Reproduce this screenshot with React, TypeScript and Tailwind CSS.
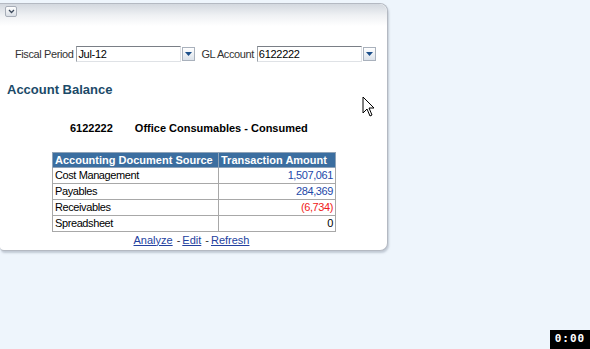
import React from "react"

const Select = ({ value }: { value: string }) => (
  <div className="flex shrink-0 items-center">
    <div className="h-[16px] w-[105px] border border-t-[#7a7f86] border-l-[#9ca1a8] border-r-[#dfe2e6] border-b-[#dfe2e6] bg-white pl-[1px] text-[11px] leading-[14px] tracking-[-0.3px] text-black">
      {value}
    </div>
    <div className="ml-[1px] flex h-[14px] w-[13px] items-center justify-center border border-[#a9b1bc] bg-gradient-to-b from-white to-[#dbe2ea]">
      <svg width="7" height="4" viewBox="0 0 7 4">
        <path d="M0 0h7L3.5 4z" fill="#1c4f8a" />
      </svg>
    </div>
  </div>
)

const rows = [
  { source: "Cost Management", amount: "1,507,061", color: "text-[#2348a8]" },
  { source: "Payables", amount: "284,369", color: "text-[#2348a8]" },
  { source: "Receivables", amount: "(6,734)", color: "text-[#f02020]" },
  { source: "Spreadsheet", amount: "0", color: "text-black" },
]

export default function App() {
  return (
    <div className="relative h-[349px] w-[590px] overflow-hidden bg-[#eef5fc] font-['Liberation_Sans',Arial,sans-serif]">
      <div className="pt-[3px]">
        <div className="relative h-[248px] w-[388px] rounded-r-[8px] rounded-bl-[4px] border border-l-0 border-[#b4b9c2] bg-white shadow-[1px_2px_2px_rgba(150,160,175,0.5)]">
          {/* header strip */}
          <div className="h-[22px] rounded-tr-[8px] bg-gradient-to-b from-[#d3d8df] via-[#eef0f3] to-white px-[5px] pt-[2px]">
            <div className="flex h-[11px] w-[12px] items-center justify-center rounded-[2px] border border-[#a7adb7] bg-gradient-to-b from-white to-[#d9dee5]">
              <svg width="7" height="5" viewBox="0 0 7 5">
                <path d="M1 1l2.5 2.5L6 1" stroke="#3d4a5c" strokeWidth="1.3" fill="none" />
              </svg>
            </div>
          </div>

          {/* filters */}
          <div className="mt-[20px] flex items-center whitespace-nowrap pl-[15px] text-[11px] tracking-[-0.4px] text-[#333]">
            <span className="mr-[3px]">Fiscal Period</span>
            <Select value="Jul-12" />
            <span className="ml-[6px] mr-[3px]">GL Account</span>
            <Select value="6122222" />
          </div>

          <div className="mt-[19px] pl-[7px] text-[13px] font-bold leading-[16px] text-[#1b4a68]">Account Balance</div>

          <div className="mt-[23px] flex text-[11px] font-bold leading-[14px] text-black">
            <span className="ml-[70px]">6122222</span>
            <span className="ml-[22px]">Office Consumables - Consumed</span>
          </div>

          <table className="ml-[52px] mt-[17px] w-[284px] border-collapse text-[11px] leading-[14px]">
            <thead>
              <tr className="h-[15px] bg-[#3b6ea0] text-white">
                <th className="w-[166px] border border-[#8fa3b8] px-[2px] py-0 text-left font-bold">Accounting Document Source</th>
                <th className="border border-[#8fa3b8] px-[2px] py-0 text-left font-bold">Transaction Amount</th>
              </tr>
            </thead>
            <tbody className="tracking-[-0.4px]">
              {rows.map((r) => (
                <tr key={r.source} className="h-[16px]">
                  <td className="border border-[#a8a8a8] px-[2px] py-0 text-black">{r.source}</td>
                  <td className={`border border-[#a8a8a8] px-[2px] py-0 text-right ${r.color}`}>{r.amount}</td>
                </tr>
              ))}
            </tbody>
          </table>

          <div className="mt-[1px] flex justify-center pr-[4px] text-[11px] leading-[14px] text-[#333]">
            <a className="text-[#2341a0] underline">Analyze</a>
            <span className="ml-[4px] mr-[2px]">-</span>
            <a className="text-[#2341a0] underline">Edit</a>
            <span className="ml-[4px] mr-[2px]">-</span>
            <a className="text-[#2341a0] underline">Refresh</a>
          </div>
        </div>
      </div>

      {/* mouse pointer */}
      <svg className="absolute left-[362px] top-[96px]" width="14" height="22" viewBox="0 0 14 22">
        <path d="M1 1v16l4-4 3 7 2-1-3-7h5z" fill="white" stroke="black" strokeWidth="1" strokeLinejoin="round" />
      </svg>

      {/* timer */}
      <div className="absolute bottom-0 right-0 flex h-[19px] w-[40px] items-center justify-center bg-black font-['DejaVu_Sans_Mono',monospace] text-[11px] font-bold tracking-[1px] text-white">
        0:00
      </div>
    </div>
  )
}
